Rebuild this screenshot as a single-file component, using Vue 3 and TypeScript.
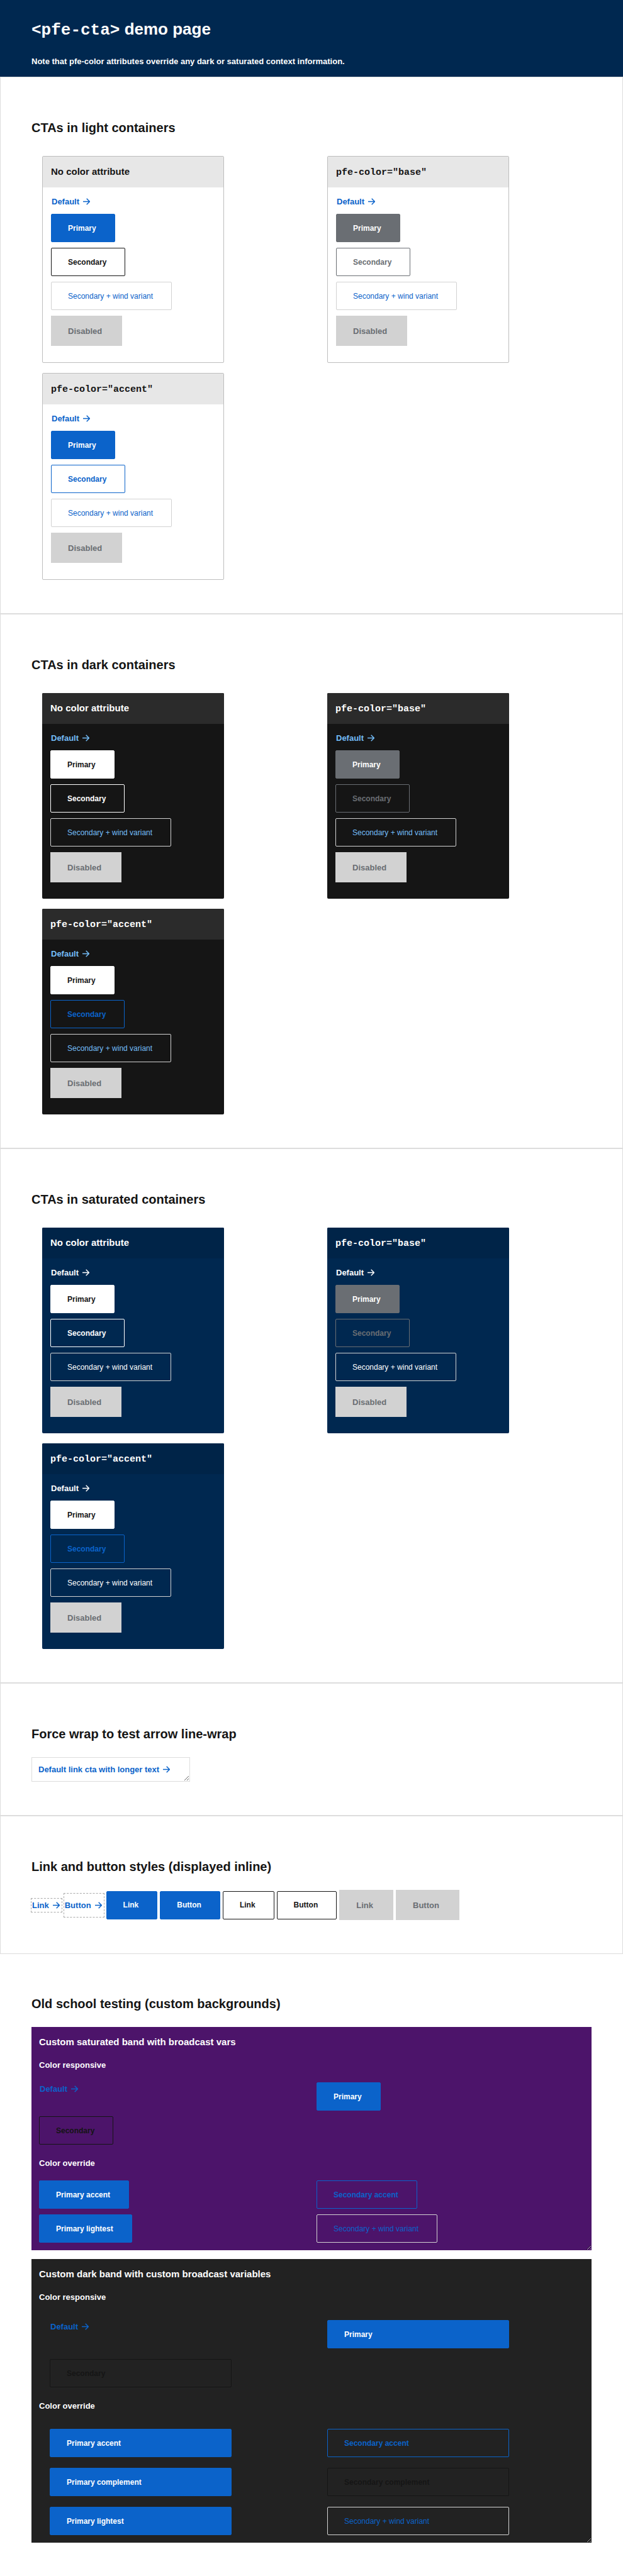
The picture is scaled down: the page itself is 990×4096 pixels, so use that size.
<script setup lang="ts">
import { h } from 'vue'

interface Cta {
  label: string
  look: string
}

interface Card {
  title: string
  code: boolean
  ctas: Cta[]
}

interface Group {
  heading: string
  theme: string
  cards: Card[]
}

const Arrow = () =>
  h('svg', { class: 'arrow', viewBox: '0 0 12 12', 'aria-hidden': 'true' }, [
    h('path', { d: 'M0 6H11.2M6.2 0.8L11.4 6L6.2 11.2', fill: 'none', stroke: 'currentColor', 'stroke-width': 1.6 }),
  ])

const card = (title: string, code: boolean, primary: string, secondary: string): Card => ({
  title,
  code,
  ctas: [
    { label: 'Primary', look: primary },
    { label: 'Secondary', look: secondary },
    { label: 'Secondary + wind variant', look: 'wind' },
    { label: 'Disabled', look: 'disabled' },
  ],
})

const groups: Group[] = [
  {
    heading: 'CTAs in light containers',
    theme: 'light',
    cards: [
      card('No color attribute', false, 'primary', 'secondary'),
      card('pfe-color="base"', true, 'primary base', 'secondary base'),
      card('pfe-color="accent"', true, 'primary', 'secondary accent'),
    ],
  },
  {
    heading: 'CTAs in dark containers',
    theme: 'dark',
    cards: [
      card('No color attribute', false, 'primary inverse', 'secondary inverse'),
      card('pfe-color="base"', true, 'primary base', 'secondary base'),
      card('pfe-color="accent"', true, 'primary inverse', 'secondary accent'),
    ],
  },
  {
    heading: 'CTAs in saturated containers',
    theme: 'saturated',
    cards: [
      card('No color attribute', false, 'primary inverse', 'secondary inverse'),
      card('pfe-color="base"', true, 'primary base', 'secondary base'),
      card('pfe-color="accent"', true, 'primary inverse', 'secondary accent'),
    ],
  },
]

const inlineLooks: string[] = ['primary', 'secondary', 'disabled']

const bands = [
  {
    name: 'purple',
    title: 'Custom saturated band with broadcast vars',
    overrides: [
      { label: 'Primary accent', look: 'primary' },
      { label: 'Secondary accent', look: 'secondary accent' },
      { label: 'Primary lightest', look: 'primary' },
      { label: 'Secondary + wind variant', look: 'wind' },
    ],
  },
  {
    name: 'charcoal',
    title: 'Custom dark band with custom broadcast variables',
    overrides: [
      { label: 'Primary accent', look: 'primary' },
      { label: 'Secondary accent', look: 'secondary accent' },
      { label: 'Primary complement', look: 'primary' },
      { label: 'Secondary complement', look: 'secondary' },
      { label: 'Primary lightest', look: 'primary' },
      { label: 'Secondary + wind variant', look: 'wind' },
    ],
  },
]
</script>

<template>
  <div class="page">
    <header class="masthead">
      <h1><code>&lt;pfe-cta&gt;</code> demo page</h1>
      <p>Note that pfe-color attributes override any dark or saturated context information.</p>
    </header>

    <main>
      <section v-for="group in groups" :key="group.theme" class="section">
        <h2>{{ group.heading }}</h2>
        <div class="cards">
          <article v-for="item in group.cards" :key="item.title" class="card" :class="group.theme">
            <h3 class="card-title">
              <code v-if="item.code">{{ item.title }}</code>
              <template v-else>{{ item.title }}</template>
            </h3>
            <div class="card-body">
              <a href="#" class="link">Default<Arrow /></a>
              <a
                v-for="cta in item.ctas"
                :key="cta.label"
                href="#"
                class="cta"
                :class="cta.look"
                :aria-disabled="cta.look === 'disabled' ? 'true' : undefined"
              >{{ cta.label }}</a>
            </div>
          </article>
        </div>
      </section>

      <section class="section">
        <h2>Force wrap to test arrow line-wrap</h2>
        <div class="wrap-box">
          <a href="#" class="link">Default link cta with longer text<Arrow /></a>
        </div>
      </section>

      <section class="section">
        <h2>Link and button styles (displayed inline)</h2>
        <div class="inline-row">
          <a href="#" class="link dashed">Link<Arrow /></a>
          <button type="button" class="link dashed tall">Button<Arrow /></button>
          <template v-for="look in inlineLooks" :key="look">
            <a href="#" class="cta" :class="look" :aria-disabled="look === 'disabled' ? 'true' : undefined">Link</a>
            <button type="button" class="cta" :class="look" :disabled="look === 'disabled'">Button</button>
          </template>
        </div>
      </section>

      <section class="section last">
        <h2>Old school testing (custom backgrounds)</h2>
        <div class="bands">
          <div v-for="band in bands" :key="band.name" class="band" :class="band.name">
            <h3>{{ band.title }}</h3>
            <h4>Color responsive</h4>
            <div class="band-grid">
              <a href="#" class="link">Default<Arrow /></a>
              <a href="#" class="cta primary">Primary</a>
              <a href="#" class="cta secondary">Secondary</a>
            </div>
            <h4 class="next">Color override</h4>
            <div class="band-grid">
              <a v-for="cta in band.overrides" :key="cta.label" href="#" class="cta" :class="cta.look">{{ cta.label }}</a>
            </div>
          </div>
        </div>
      </section>
    </main>
  </div>
</template>

<style>
body {
  margin: 0;
  background: #fff;
}
</style>

<style scoped>
.page {
  font-family: "Liberation Sans", Arial, Helvetica, sans-serif;
  font-size: 13px;
  color: #151515;
  --blue: #0b63ca;
}

h1,
h2,
h3,
h4,
p {
  margin: 0;
  font-weight: bold;
}

code {
  font-family: "Liberation Mono", "Courier New", monospace;
  font-size: inherit;
  line-height: 1;
}

.masthead {
  padding: 31px 50px 15px;
  background: #002850;
  color: #fff;
}

.masthead h1 {
  margin-bottom: 28px;
  font-size: 26px;
  line-height: 30px;
}

.masthead p {
  line-height: 18px;
}

.section {
  padding: 68px 49px 53px;
  border: 1px solid #ddd;
}

.section.last {
  padding: 67px 50px 53px;
  border: 0;
}

h2 {
  margin-bottom: 25px;
  font-size: 20px;
  line-height: 24px;
}

h3 {
  font-size: 15px;
  line-height: 18px;
}

h4 {
  font-size: 13px;
  line-height: 18px;
}

.cards {
  display: grid;
  grid-template-columns: 1fr 1fr;
  gap: 16px;
  padding-top: 8px;
}

.card {
  box-sizing: border-box;
  width: 100%;
  max-width: 289px;
  margin-left: 17px;
  border-radius: 2px;
  overflow: hidden;
}

.card-title {
  padding: 15px 13px 16px;
}

.card-body {
  display: flex;
  flex-direction: column;
  align-items: flex-start;
  gap: 9px;
  padding: 12px 13px 26px;
}

.light {
  border: 1px solid #bebebe;
}

.light .card-title {
  background: #e7e7e7;
}

.dark {
  background: #151515;
  color: #fff;
}

.dark .card-title {
  background: #2b2b2b;
}

.saturated {
  background: #002850;
  color: #fff;
}

.saturated .card-title {
  background: #002448;
}

.link {
  display: inline-flex;
  align-items: center;
  gap: 6px;
  padding: 0 1px;
  border: 0;
  background: none;
  color: var(--blue);
  font-family: inherit;
  font-size: 13px;
  font-weight: bold;
  line-height: 21px;
  text-decoration: none;
  cursor: pointer;
}

.arrow {
  width: 11px;
  height: 11px;
}

.dark .link,
.dark .wind {
  color: #73bcf7;
}

.saturated .link,
.saturated .wind {
  color: #fff;
}

.cta {
  display: inline-flex;
  align-items: center;
  box-sizing: border-box;
  height: 45px;
  padding: 0 29px 0 26px;
  border: 1px solid transparent;
  border-radius: 2px;
  background: none;
  font-family: inherit;
  font-size: 12px;
  font-weight: bold;
  text-decoration: none;
  white-space: nowrap;
  cursor: pointer;
}

.primary {
  background: var(--blue);
  border-color: var(--blue);
  color: #fff;
}

.primary.base {
  background: #6a6e73;
  border-color: #6a6e73;
}

.primary.inverse {
  background: #fff;
  border-color: #fff;
  color: #151515;
}

.secondary {
  border-color: #151515;
  color: #151515;
}

.secondary.base {
  border-color: #6a6e73;
  color: #6a6e73;
}

.secondary.accent {
  border-color: var(--blue);
  color: var(--blue);
}

.secondary.inverse {
  border-color: #fff;
  color: #fff;
}

.wind {
  border-color: #d2d2d2;
  color: var(--blue);
  font-weight: normal;
}

.disabled {
  height: 48px;
  padding-right: 31px;
  border-color: #d2d2d2;
  border-radius: 0;
  background: #d2d2d2;
  color: #6a6e73;
  font-size: 13px;
  cursor: default;
}

.wrap-box {
  box-sizing: border-box;
  width: 252px;
  max-width: 100%;
  padding: 8px 9px;
  border: 1px solid #ddd;
  overflow: auto;
  resize: horizontal;
  display: flex;
}

.inline-row {
  display: flex;
  flex-wrap: wrap;
  align-items: center;
  gap: 4px;
}

.dashed {
  padding-right: 3px;
  outline: 1px dashed #aaa;
}

.tall {
  height: 37px;
}

.bands {
  display: grid;
  gap: 14px;
}

.band {
  padding: 15px 12px 12px;
  color: #fff;
  overflow: auto;
  resize: vertical;
}

.band h3 {
  margin-bottom: 19px;
}

.band .next {
  margin-top: 21px;
}

.band-grid {
  display: grid;
  grid-template-columns: 1fr 1fr;
  gap: 9px 16px;
  align-items: start;
  justify-items: start;
  margin-top: 18px;
}

.purple {
  background: #4c146a;
}

.charcoal {
  background: #222;
}

.charcoal .band-grid {
  row-gap: 17px;
  margin-top: 27px;
}

.charcoal .link,
.charcoal .cta {
  margin-left: 17px;
}

.charcoal .cta {
  width: 289px;
}
</style>
